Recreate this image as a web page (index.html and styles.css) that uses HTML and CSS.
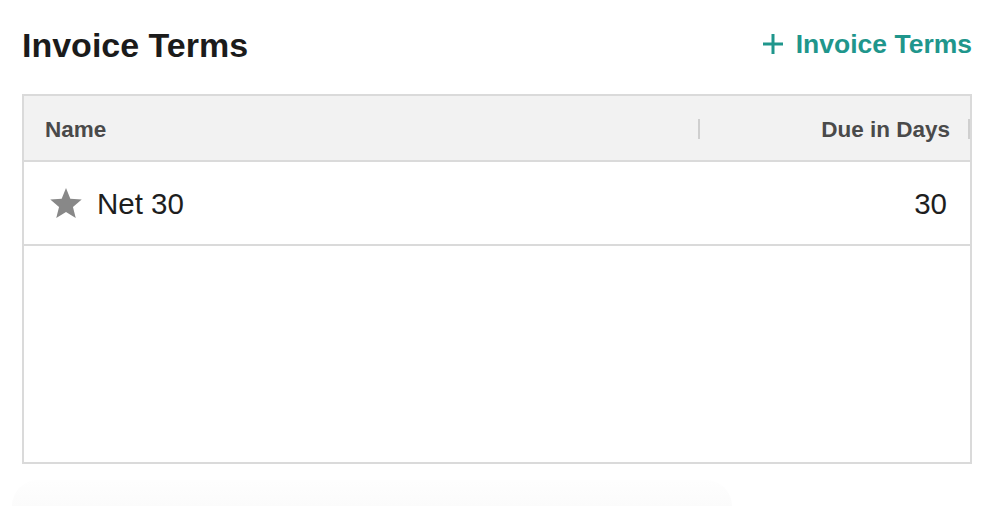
FILE: index.html
```html
<!DOCTYPE html>
<html lang="en">
<head>
    <meta charset="UTF-8">
    <meta name="viewport" content="width=device-width, initial-scale=1.0">
    <title>Invoice Terms</title>
    <link rel="stylesheet" href="styles.css">
</head>
<body>
    <div class="page">
        <div class="page-head">
            <h1 class="page-title">Invoice Terms</h1>
            <a class="add-link" href="#">
                <svg class="plus" width="22" height="22" viewBox="0 0 22 22">
                    <path d="M11 1v20M1 11h20" stroke="currentColor" stroke-width="3" fill="none"/>
                </svg>
                Invoice Terms
            </a>
        </div>

        <div class="terms-table">
            <div class="table-head">
                <div class="col-name">Name<span class="col-sep"></span></div>
                <div class="col-days">Due in Days<span class="col-sep"></span></div>
            </div>
            <div class="table-row">
                <div class="col-name">
                    <svg class="star" width="34" height="32" viewBox="0 0 24 23">
                        <path d="M12 0.8l3.1 7.6 8.2 0.6-6.3 5.3 2 8-7-4.4-7 4.4 2-8-6.3-5.3 8.2-0.6z" fill="#888"/>
                    </svg>
                    Net 30
                </div>
                <div class="col-days">30</div>
            </div>
            <div class="table-empty"></div>
        </div>
        <div class="fade"></div>
    </div>
</body>
</html>
```

FILE: styles.css
```css
body {
    margin: 0;
    background-color: #fff;
    font-family: "Liberation Sans", Arial, sans-serif;
}

.page {
    width: 950px;
    padding: 0 0 0 22px;
}

.page-head {
    display: flex;
    justify-content: space-between;
    align-items: center;
    height: 94px;
}

.page-title {
    margin: 0;
    font-size: 34px;
    font-weight: bold;
    color: #1b1b1b;
    padding-bottom: 4px;
}

.add-link {
    display: flex;
    align-items: center;
    gap: 12px;
    color: #1f968c;
    font-size: 26.5px;
    font-weight: bold;
    text-decoration: none;
    padding-bottom: 6px;
}

.terms-table {
    border: 2px solid #dadada;
    height: 366px;
    display: flex;
    flex-direction: column;
}

.table-head,
.table-row {
    display: flex;
    align-items: center;
    box-sizing: border-box;
    border-bottom: 2px solid #dadada;
}

.table-head {
    height: 66px;
    padding-top: 3px;
    background-color: #f2f2f2;
    font-size: 22.5px;
    font-weight: bold;
    color: #4a4a4a;
}

.table-row {
    height: 84px;
    padding-top: 2px;
    font-size: 29.5px;
    color: #1e1e1e;
}

.col-name {
    position: relative;
    box-sizing: border-box;
    width: 676px;
    padding-left: 21px;
    display: flex;
    align-items: center;
}

.col-days {
    position: relative;
    flex: 1;
    text-align: right;
    padding-right: 23px;
}

.table-head .col-days {
    padding-right: 20px;
}

.col-sep {
    position: absolute;
    right: 0;
    top: 50%;
    margin-top: -11px;
    width: 2px;
    height: 20px;
    background-color: #cfcfcf;
}

.star {
    margin-left: 4px;
    margin-right: 14px;
    margin-top: -3px;
}

.table-empty {
    flex: 1;
}

.fade {
    margin: 16px 0 0 -10px;
    width: 720px;
    height: 26px;
    border-radius: 40px 40px 0 0;
    background: linear-gradient(#fefefe, #fbfbfb);
}
```
